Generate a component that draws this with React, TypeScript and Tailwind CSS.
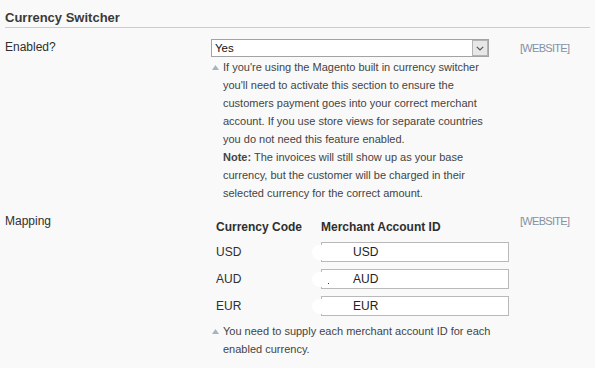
import React from "react";

function Tri() {
  return (
    <div className="w-[12px] shrink-0 pt-[7px] pl-[1px]">
      <svg width="7" height="5" viewBox="0 0 7 5" className="block">
        <polygon points="3.5,0 7,5 0,5" fill="#a7b4bc" />
      </svg>
    </div>
  );
}

function Scope() {
  return (
    <div className="text-[11px] leading-[16px] tracking-[-0.7px] text-[#8391a5]">[WEBSITE]</div>
  );
}

function MapRow({ code, dot }: { code: string; dot?: boolean }) {
  return (
    <div className="flex h-[20px] items-center">
      <div className="w-[105px] text-[12px] leading-[20px] text-[#2f2f2f]">{code}</div>
      <div className="relative h-[20px] w-[188px] border border-[#b9b9b9] bg-white">
        <div className="pl-[31px] text-[12px] leading-[18px] text-[#222]">{code}</div>
        <div className="absolute left-[-10px] top-[2px] h-[15px] w-[40px] rounded-full bg-white" />
        {dot && <div className="absolute left-[6px] top-[13px] h-[1px] w-[1px] bg-[#333]" />}
      </div>
    </div>
  );
}

export default function App() {
  return (
    <div
      className="h-[368px] w-[595px] overflow-hidden bg-[#f9f9f9] text-[#2f2f2f]"
      style={{ fontFamily: '"Liberation Sans", Arial, sans-serif' }}
    >
      <div className="mx-[5px] border-b border-[#cccccc] pt-[10px] pb-[1px] text-[13px] font-bold leading-[16px] text-[#3a3a3a]">
        Currency Switcher
      </div>

      {/* Row 1 */}
      <div className="mt-[11px] flex">
        <div className="w-[211px] shrink-0 pl-[5px] text-[12px] leading-[16px]">Enabled?</div>
        <div className="w-[309px] shrink-0">
          <div className="flex h-[18px] w-[278px] border border-[#a3a3a3] bg-white">
            <div className="flex-1 pl-[3px] text-[11.5px] leading-[16px] text-[#111]">Yes</div>
            <div className="flex w-[16px] items-center justify-center border border-[#b3b3b3] bg-[#e7e7e7]">
              <svg width="8" height="5" viewBox="0 0 8 5">
                <polyline points="0.8,0.8 4,4 7.2,0.8" fill="none" stroke="#555" strokeWidth="1.2" />
              </svg>
            </div>
          </div>
          <div className="mt-[1px] flex w-[280px]">
            <Tri />
            <div className="w-[268px] text-[11px] leading-[18px] text-[#444]">
              If you're using the Magento built in currency switcher you'll need to activate this section to ensure the customers payment goes into your correct merchant account. If you use store views for separate countries you do not need this feature enabled.
              <br />
              <b>Note:</b> The invoices will still show up as your base currency, but the customer will be charged in their selected currency for the correct amount.
            </div>
          </div>
        </div>
        <div className="pt-[1px]">
          <Scope />
        </div>
      </div>

      {/* Row 2 */}
      <div className="mt-[11px] flex">
        <div className="w-[211px] shrink-0 pl-[5px] text-[12px] leading-[16px]">Mapping</div>
        <div className="w-[309px] shrink-0 pt-[6px]">
          <div className="pl-[5px]">
            <div className="mb-[7px] flex h-[16px] text-[12px] font-bold leading-[16px] text-[#2f2f2f]">
              <div className="w-[105px]">Currency Code</div>
              <div>Merchant Account ID</div>
            </div>
            <div className="flex flex-col gap-[7px]">
              <MapRow code="USD" />
              <MapRow code="AUD" dot />
              <MapRow code="EUR" />
            </div>
          </div>
          <div className="mt-[6px] flex w-[280px]">
            <Tri />
            <div className="w-[268px] text-[11px] leading-[18px] text-[#444]">
              You need to supply each merchant account ID for each enabled currency.
            </div>
          </div>
        </div>
        <div>
          <Scope />
        </div>
      </div>
    </div>
  );
}
